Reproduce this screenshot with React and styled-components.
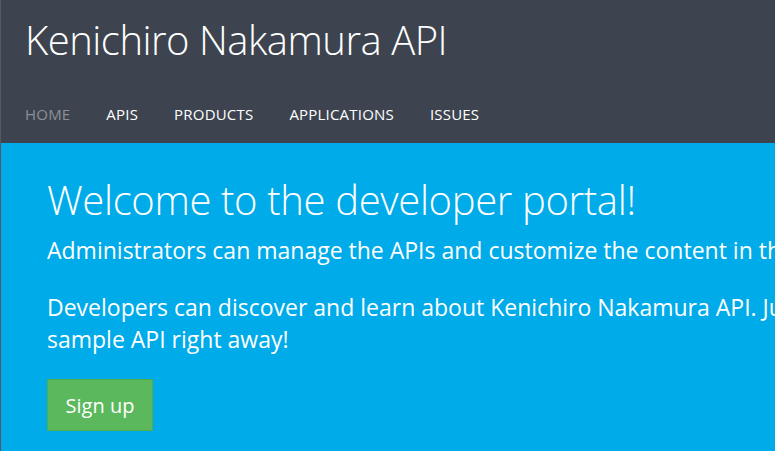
import React from "react";
import styled, { createGlobalStyle } from "styled-components";

const GlobalStyle = createGlobalStyle`
  html, body {
    margin: 0;
    padding: 0;
    overflow: hidden;
    background: #00abe9;
  }
  body {
    font-family: "Open Sans", "Segoe UI", "Liberation Sans", sans-serif;
    color: #fff;
  }
`;

const Page = styled.div`
  width: 1100px;
  min-height: 451px;
  border-left: 1px solid #555a60;
  background: #00abe9;
`;

const Header = styled.header`
  background: #3d4450;
  height: 143px;
  box-sizing: border-box;
  padding: 16px 0 19px;
  display: flex;
  flex-direction: column;
  justify-content: space-between;
`;

const Brand = styled.h1`
  margin: 0;
  padding-left: 24px;
  font-size: 40px;
  line-height: 48px;
  font-weight: 300;
  letter-spacing: -0.5px;
  color: #fff;
`;

const Nav = styled.nav`
  display: flex;
  padding-left: 6px;
`;

const NavLink = styled.a`
  padding: 0 18px;
  font-size: 15px;
  line-height: 20px;
  letter-spacing: 0.2px;
  text-transform: uppercase;
  color: ${(p) => (p.$active ? "#8c9097" : "#fff")};
  text-decoration: none;
`;

const Hero = styled.section`
  padding: 33px 0 0 46px;
  width: 990px;
`;

const Title = styled.h2`
  margin: 0 0 10px;
  font-size: 40px;
  font-weight: 300;
  line-height: 48px;
  letter-spacing: -0.35px;
`;

const Lead = styled.p`
  margin: 0 0 25px;
  font-size: 23px;
  line-height: 32px;

  &:last-of-type {
    margin-bottom: 24px;
  }
`;

const SignUp = styled.button`
  display: block;
  background: #5cb85c;
  border: 1px solid #4cae4c;
  color: #fff;
  font-family: inherit;
  font-size: 20px;
  width: 106px;
  height: 52px;
  padding: 0;
`;

export default function App() {
  return (
    <Page>
      <GlobalStyle />
      <Header>
        <Brand>Kenichiro Nakamura API</Brand>
        <Nav>
          <NavLink $active>Home</NavLink>
          <NavLink>APIs</NavLink>
          <NavLink>Products</NavLink>
          <NavLink>Applications</NavLink>
          <NavLink>Issues</NavLink>
        </Nav>
      </Header>
      <Hero>
        <Title>Welcome to the developer portal!</Title>
        <Lead>
          Administrators can manage the APIs and customize the content in this
          portal.
        </Lead>
        <Lead>
          Developers can discover and learn about Kenichiro Nakamura API. Just
          sign up and try the sample API right away!
        </Lead>
        <SignUp>Sign up</SignUp>
      </Hero>
    </Page>
  );
}
